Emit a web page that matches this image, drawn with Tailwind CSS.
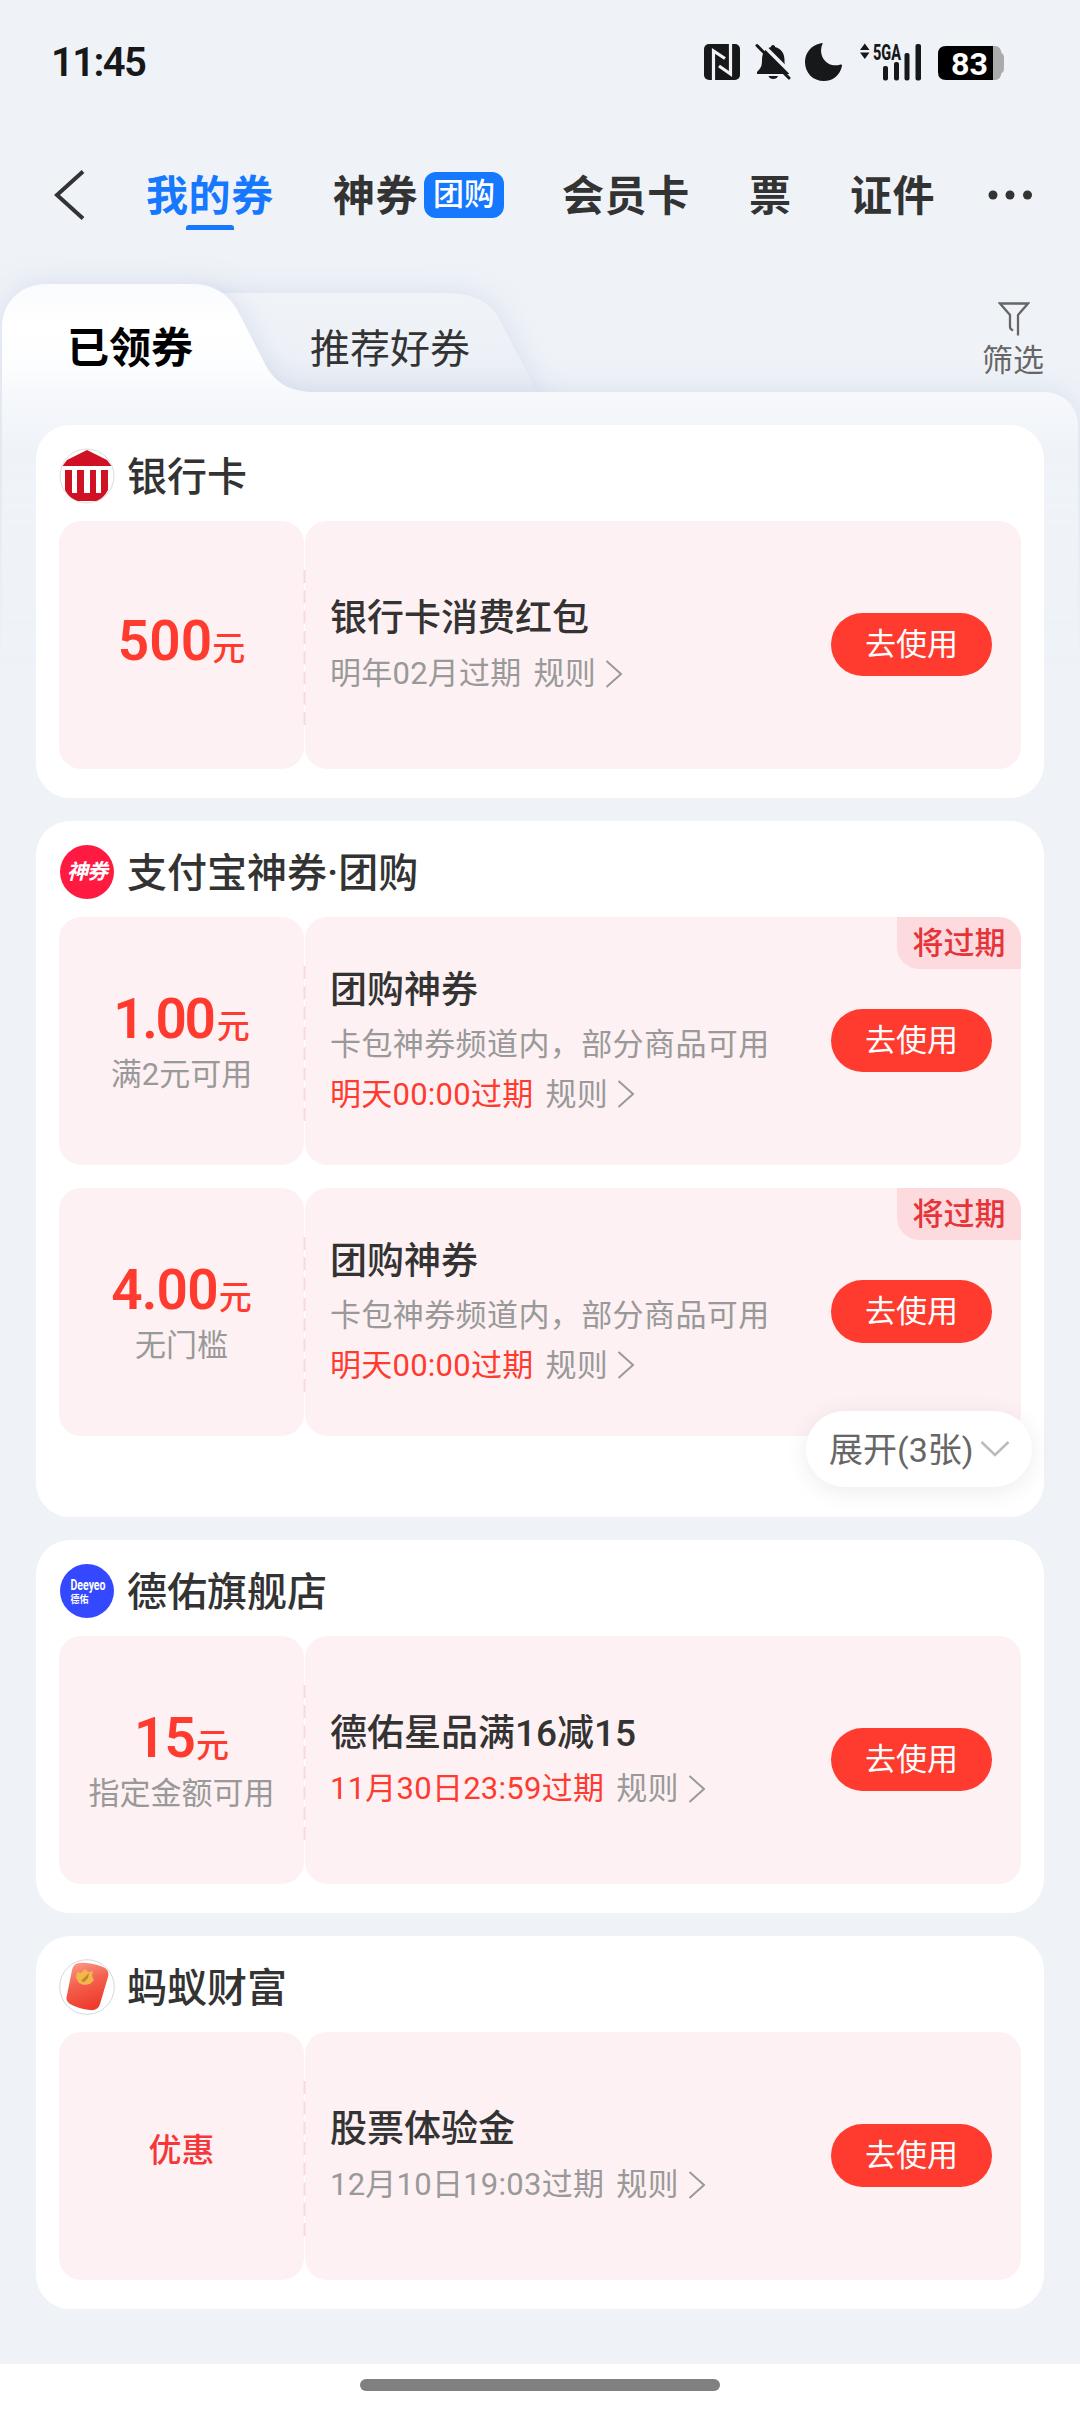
<!DOCTYPE html>
<html lang="zh-CN">
<head>
<meta charset="utf-8">
<title>我的券</title>
<script src="https://cdn.jsdelivr.net/npm/@tailwindcss/browser@4"></script>
</head>
<body class="w-[1080px] h-[2412px] overflow-hidden bg-[#eff3f8] font-['Roboto','Noto_Sans_CJK_SC',sans-serif] text-[#333]">
<div class="relative flex h-full flex-col">

  <!-- tab and sheet shapes behind the content -->
  <svg class="absolute left-0 top-[230px]" width="1080" height="520" viewBox="0 230 1080 520" fill="none">
    <defs>
      <linearGradient id="sheet" gradientUnits="userSpaceOnUse" x1="0" y1="284" x2="0" y2="455">
        <stop offset="0" stop-color="#fafbfe"/><stop offset=".25" stop-color="#fff"/><stop offset=".5" stop-color="#fcfdfe"/><stop offset=".65" stop-color="#f6f8fb"/><stop offset="1" stop-color="#eff3f8"/>
      </linearGradient>
      <linearGradient id="tab" gradientUnits="userSpaceOnUse" x1="0" y1="292" x2="0" y2="392">
        <stop offset="0" stop-color="#f0f4f8"/><stop offset=".6" stop-color="#edf1f7"/><stop offset="1" stop-color="#e7ebf3"/>
      </linearGradient>
      <filter id="soft" filterUnits="userSpaceOnUse" x="-60" y="200" width="1200" height="700"><feDropShadow dx="0" dy="0" stdDeviation="14" flood-color="#b4c0da" flood-opacity=".42"/></filter>
      <linearGradient id="fade" gradientUnits="userSpaceOnUse" x1="0" y1="460" x2="0" y2="670"><stop offset="0" stop-color="#fff"/><stop offset="1" stop-color="#000"/></linearGradient>
      <mask id="m" maskUnits="userSpaceOnUse" x="0" y="200" width="1080" height="560"><rect x="0" y="200" width="1080" height="560" fill="url(#fade)"/></mask>
    </defs>
    <g mask="url(#m)">
      <path filter="url(#soft)" fill="url(#tab)" d="M200 420V293H441C470 293 486 299 497 315L529 376Q533 387 540 392V420Z"/>
      <path filter="url(#soft)" fill="url(#sheet)" d="M2 900V329C2 300 22 284 47 284H192C216 284 231 296 241 317L266 366C277 385 292 392 315 392H1045C1063 392 1078 407 1078 425V900Z"/>
    </g>
  </svg>

  <!-- status bar -->
  <div class="relative flex h-[124px] items-center justify-between pl-[51px] pr-[76px]">
    <span class="pt-px text-[40px] font-semibold leading-none tracking-[-1.6px] text-[#17181a]">11:45</span>
    <svg width="300" height="60" viewBox="704 32 300 60" fill="#17181a">
      <rect x="704" y="44" width="36" height="36" rx="5"/>
      <g fill="none" stroke="#eff3f8" stroke-width="3.2"><path d="M713.500 80V51L725 58.500M730.500 44V74L719 66"/></g>
      <path d="M773 45c1.500 0 2 1 2 2 6 1.500 9.500 6 9.500 13 0 6 .5 8 4.500 12v2H757v-2c4-4 5-6 5-12 0-7 3-11.500 9-13 0-1 .5-2 2-2ZM768.500 76h9.500c-1 4-8.500 4-9.500 0Z"/>
      <path d="M760 42L794 76" stroke="#eff3f8" stroke-width="3.500"/>
      <path d="M757 45.500L789 78" stroke="#17181a" stroke-width="3" stroke-linecap="round"/>
      <path d="M822.500 44c-5 11 4 25 18 20.500q2-.5 1.500 1.500c-2 9-9 15-18 15-11 0-19-8-19-19 0-9 6-16.500 15-18.500q3.500-1 2.500.5Z"/>
      <path d="M860 50l4.800-6.500L869.500 50ZM860 52.500h9.500L864.800 59Z"/>
      <text x="873" y="59.500" font-family="Roboto" font-weight="800" font-size="22" textLength="28" lengthAdjust="spacingAndGlyphs">5GA</text>
      <rect x="883" y="66" width="5" height="14.500" rx="2"/><rect x="894" y="62" width="5" height="18.500" rx="2"/><rect x="904.500" y="53" width="5" height="27.500" rx="2"/><rect x="915.500" y="44" width="5.500" height="36.500" rx="2"/>
      <path fill="#a9abad" d="M990 46h5c4 0 6 3 6.500 7q2.500 1 2.500 4v12q0 3-2.500 4c-.5 4-2.500 7-6.500 7h-5Z"/>
      <path fill="#000" d="M946 46h47v34H946q-8 0-8-8V54q0-8 8-8Z"/>
      <text x="951" y="74.500" font-family="Roboto" font-weight="700" font-size="31" fill="#fff" textLength="37" lengthAdjust="spacingAndGlyphs">83</text>
    </svg>
  </div>

  <!-- category navigation -->
  <div class="relative flex h-[146px] items-center pl-[53px] text-[42px] font-bold leading-[60px] tracking-[0.6px]">
    <svg class="mb-[4px] shrink-0" width="32" height="50" viewBox="0 0 32 50" fill="none" stroke="#333" stroke-width="4"><path d="M30 1.500L4 25L30 48.500"/></svg>
    <div class="relative ml-[61px] w-[128px] text-[#1677ff]">我的券<span class="absolute -bottom-[3px] left-[40px] h-[5px] w-[48px] rounded-t-[3px] bg-[#1677ff]"></span></div>
    <div class="ml-[59px] w-[86px]">神券</div>
    <div class="mb-[4px] ml-[5px] flex h-[46px] w-[80px] items-center justify-center rounded-[12px] bg-[#1677ff] text-[31px] font-medium tracking-normal text-white">团购</div>
    <div class="ml-[58px] w-[128px]">会员卡</div>
    <div class="ml-[59px] w-[43px]">票</div>
    <div class="ml-[58px] w-[86px]">证件</div>
    <svg class="mb-[4px] ml-[51px]" width="46" height="12" viewBox="0 0 46 12" fill="#333"><circle cx="6" cy="6" r="4.500"/><circle cx="23" cy="6" r="4.500"/><circle cx="40.500" cy="6" r="4.500"/></svg>
  </div>

  <!-- sub tabs -->
  <div class="relative flex h-[122px] pl-[67px] pr-[36px]">
    <div class="mt-[49px] w-[240px] text-[42px] font-bold leading-[60px] text-black">已领券</div>
    <div class="mt-[50px] ml-[3px] text-[40px] leading-[60px]">推荐好券</div>
    <div class="ml-auto mt-[31px] flex w-[62px] flex-col items-center text-[31px] leading-[36px] text-[#666]">
      <svg class="ml-[2px]" width="32" height="36" viewBox="0 0 32 36" fill="none" stroke="#666" stroke-width="2.300"><path d="M20 34.500V14L30 2.500H2L12 14V26Q12 28 15 29.500"/></svg>
      <span class="mt-[6px]">筛选</span>
    </div>
  </div>

  <main class="relative flex flex-col gap-[23px] px-[36px] pt-[33px]">

    <section class="h-[373px] w-[1008px] rounded-[34px] bg-white px-[23px] pt-[24px]">
      <header class="flex h-[54px] items-center gap-[12px] text-[40px] font-medium leading-[54px]">
        <svg width="56" height="56" viewBox="0 0 56 56"><circle cx="28" cy="28" r="27" fill="#fff" stroke="#ddd"/><path fill="#d01124" d="M28 2L48 12L52.500 18H3.500L8 12ZM6 22H13V45H18V22H25V45H31V22H37V45H42V22H49V42Q45 50 37.500 53H18.500Q10 50 6 42Z"/></svg>
        <h2 class="pt-[3px]">银行卡</h2>
      </header>
      <article class="mt-[18px] flex h-[248px] items-center rounded-[22px]">
        <div class="flex h-full w-[245px] items-center justify-center rounded-[22px] bg-[#fef1f3]">
          <p class="flex items-baseline leading-[60px] text-[#ff3b30]"><b class="text-[55px] font-semibold">500</b><span class="text-[33px] font-medium">元</span></p>
        </div>
        <svg class="z-10 -mx-px mt-[5px] shrink-0" width="3" height="155" viewBox="0 0 3 155"><path d="M1.500 0V155" stroke="#f9d9de" stroke-width="2" stroke-dasharray="13 7.300"/></svg>
        <div class="flex h-full flex-1 items-center justify-between rounded-[22px] bg-[#fef1f3] pl-[25px] pr-[29px]">
          <div class="pt-[2px]">
            <h3 class="text-[37px] font-medium leading-[55px]">银行卡消费红包</h3>
            <p class="flex items-center gap-[12px] text-[31px] leading-[56px] tracking-[0.25px] text-[#999]"><span>明年02月过期</span><span class="flex items-center gap-[9px]">规则<svg width="18" height="28" viewBox="0 0 18 28" fill="none" stroke="#999" stroke-width="2"><path d="M1.500 1L16 14L1.500 27"/></svg></span></p>
          </div>
          <button class="mb-[2px] h-[63px] w-[161px] rounded-full bg-[#ff3b30] text-[31px] leading-[64px] text-white">去使用</button>
        </div>
      </article>
    </section>

    <section class="relative h-[696px] w-[1008px] rounded-[34px] bg-white px-[23px] pt-[24px]">
      <header class="flex h-[54px] items-center gap-[13px] text-[40px] font-medium leading-[54px]">
        <div class="ml-px flex h-[54px] w-[54px] items-center justify-center rounded-full bg-[#ff1a42] text-[21px] font-bold italic tracking-[-1px] text-white">神券</div>
        <h2 class="pt-[3px]">支付宝神券·团购</h2>
      </header>
      <article class="relative mt-[18px] flex h-[248px] items-center rounded-[22px]">
        <div class="flex h-full w-[245px] flex-col items-center justify-center rounded-[22px] bg-[#fef1f3]">
          <p class="mt-[5px] flex items-baseline leading-[60px] text-[#ff3b30]"><b class="text-[55px] font-semibold tracking-[-2.4px]">1.00</b><span class="ml-[3px] text-[33px] font-medium">元</span></p>
          <p class="-mt-[5px] text-[31px] leading-[46px] text-[#999]">满2元可用</p>
        </div>
        <svg class="z-10 -mx-px mt-[5px] shrink-0" width="3" height="155" viewBox="0 0 3 155"><path d="M1.500 0V155" stroke="#f9d9de" stroke-width="2" stroke-dasharray="13 7.300"/></svg>
        <div class="flex h-full flex-1 items-center justify-between rounded-[22px] bg-[#fef1f3] pl-[25px] pr-[29px]">
          <div class="pb-[3px]">
            <h3 class="text-[37px] font-medium leading-[59px]">团购神券</h3>
            <p class="text-[31px] leading-[50px] tracking-[0.4px] text-[#999]">卡包神券频道内，部分商品可用</p>
            <p class="flex items-center gap-[12px] text-[31px] leading-[49px] tracking-[0.25px] text-[#999]"><span class="text-[#ff3b30]">明天00:00过期</span><span class="flex items-center gap-[9px]">规则<svg width="18" height="28" viewBox="0 0 18 28" fill="none" stroke="#999" stroke-width="2"><path d="M1.500 1L16 14L1.500 27"/></svg></span></p>
          </div>
          <button class="mb-[2px] h-[63px] w-[161px] rounded-full bg-[#ff3b30] text-[31px] leading-[64px] text-white">去使用</button>
        </div>
        <span class="absolute right-0 top-0 h-[52px] w-[124px] rounded-tr-[22px] rounded-bl-[22px] bg-[#fcdadd] text-center text-[31px] font-medium leading-[53px] text-[#e5353a]">将过期</span>
      </article>
      <article class="relative mt-[23px] flex h-[248px] items-center rounded-[22px]">
        <div class="flex h-full w-[245px] flex-col items-center justify-center rounded-[22px] bg-[#fef1f3]">
          <p class="mt-[5px] flex items-baseline leading-[60px] text-[#ff3b30]"><b class="text-[55px] font-semibold tracking-[-0.8px]">4.00</b><span class="ml-px text-[33px] font-medium">元</span></p>
          <p class="-mt-[5px] text-[31px] leading-[46px] text-[#999]">无门槛</p>
        </div>
        <svg class="z-10 -mx-px mt-[5px] shrink-0" width="3" height="155" viewBox="0 0 3 155"><path d="M1.500 0V155" stroke="#f9d9de" stroke-width="2" stroke-dasharray="13 7.300"/></svg>
        <div class="flex h-full flex-1 items-center justify-between rounded-[22px] bg-[#fef1f3] pl-[25px] pr-[29px]">
          <div class="pb-[3px]">
            <h3 class="text-[37px] font-medium leading-[59px]">团购神券</h3>
            <p class="text-[31px] leading-[50px] tracking-[0.4px] text-[#999]">卡包神券频道内，部分商品可用</p>
            <p class="flex items-center gap-[12px] text-[31px] leading-[49px] tracking-[0.25px] text-[#999]"><span class="text-[#ff3b30]">明天00:00过期</span><span class="flex items-center gap-[9px]">规则<svg width="18" height="28" viewBox="0 0 18 28" fill="none" stroke="#999" stroke-width="2"><path d="M1.500 1L16 14L1.500 27"/></svg></span></p>
          </div>
          <button class="mb-[2px] h-[63px] w-[161px] rounded-full bg-[#ff3b30] text-[31px] leading-[64px] text-white">去使用</button>
        </div>
        <span class="absolute right-0 top-0 h-[52px] w-[124px] rounded-tr-[22px] rounded-bl-[22px] bg-[#fcdadd] text-center text-[31px] font-medium leading-[53px] text-[#e5353a]">将过期</span>
      </article>
      <button class="absolute bottom-[30px] right-[12px] flex h-[76px] w-[226px] items-center gap-[6px] rounded-full bg-white pl-[23px] text-[34px] text-[#666] shadow-[0_4px_24px_rgba(0,0,0,0.08)]"><span class="pt-[2px]">展开(3张)</span><svg width="30" height="18" viewBox="0 0 30 18" fill="none" stroke="#bbb" stroke-width="2.500"><path d="M1.500 2L15 15L28.500 2"/></svg></button>
    </section>

    <section class="h-[373px] w-[1008px] rounded-[34px] bg-white px-[23px] pt-[24px]">
      <header class="flex h-[54px] items-center gap-[13px] text-[40px] font-medium leading-[54px]">
        <svg class="ml-px" width="54" height="54" viewBox="60 1564 54 54" fill="#fff" font-family="Roboto, 'Noto Sans CJK SC', sans-serif" font-weight="700"><circle cx="87" cy="1591" r="27" fill="#3348ff"/><text x="70.500" y="1590" font-size="14" textLength="35" lengthAdjust="spacingAndGlyphs">Deeyeo</text><text x="70.500" y="1602.500" font-size="10" textLength="18" lengthAdjust="spacingAndGlyphs">德佑</text></svg>
        <h2 class="pt-[3px]">德佑旗舰店</h2>
      </header>
      <article class="mt-[18px] flex h-[248px] items-center rounded-[22px]">
        <div class="flex h-full w-[245px] flex-col items-center justify-center rounded-[22px] bg-[#fef1f3]">
          <p class="mt-[5px] flex items-baseline leading-[60px] text-[#ff3b30]"><b class="text-[55px] font-semibold tracking-[-1px]">15</b><span class="ml-px text-[33px] font-medium">元</span></p>
          <p class="-mt-[5px] text-[31px] leading-[46px] text-[#999]">指定金额可用</p>
        </div>
        <svg class="z-10 -mx-px mt-[5px] shrink-0" width="3" height="155" viewBox="0 0 3 155"><path d="M1.500 0V155" stroke="#f9d9de" stroke-width="2" stroke-dasharray="13 7.300"/></svg>
        <div class="flex h-full flex-1 items-center justify-between rounded-[22px] bg-[#fef1f3] pl-[25px] pr-[29px]">
          <div class="pt-[2px]">
            <h3 class="text-[37px] font-medium leading-[55px]">德佑星品满16减15</h3>
            <p class="flex items-center gap-[12px] text-[31px] leading-[56px] tracking-[0.25px] text-[#999]"><span class="text-[#ff3b30]">11月30日23:59过期</span><span class="flex items-center gap-[9px]">规则<svg width="18" height="28" viewBox="0 0 18 28" fill="none" stroke="#999" stroke-width="2"><path d="M1.500 1L16 14L1.500 27"/></svg></span></p>
          </div>
          <button class="mb-[2px] h-[63px] w-[161px] rounded-full bg-[#ff3b30] text-[31px] leading-[64px] text-white">去使用</button>
        </div>
      </article>
    </section>

    <section class="h-[373px] w-[1008px] rounded-[34px] bg-white px-[23px] pt-[24px]">
      <header class="flex h-[54px] items-center gap-[12px] text-[40px] font-medium leading-[54px]">
        <svg width="56" height="56" viewBox="0 0 56 56"><defs><linearGradient id="env" x1="0" y1="0" x2=".3" y2="1"><stop offset="0" stop-color="#fba08c"/><stop offset=".5" stop-color="#f4604f"/><stop offset="1" stop-color="#ee3d2e"/></linearGradient></defs><circle cx="28" cy="28" r="27.300" fill="#fff" stroke="#cfd9e2"/><path fill="url(#env)" d="M20 4Q30 3 44 8Q51 11 49 18L41 45Q39 52 31 51Q20 50 11 45Q6 42 8 36L13 11Q14 5 20 4Z"/><path fill="#f3b64a" d="M18 13l4 1 4-4 3 3 5-1-1 5 2 4-4 4-6 1-5-2-3-5Z"/><path d="M22 22l8-8-1 5-4 4Z" fill="#c5832a"/></svg>
        <h2 class="pt-[3px]">蚂蚁财富</h2>
      </header>
      <article class="mt-[18px] flex h-[248px] items-center rounded-[22px]">
        <div class="flex h-full w-[245px] items-center justify-center rounded-[22px] bg-[#fef1f3]">
          <p class="mb-[10px] text-[33px] font-medium leading-[50px] text-[#f5373a]">优惠</p>
        </div>
        <svg class="z-10 -mx-px mt-[5px] shrink-0" width="3" height="155" viewBox="0 0 3 155"><path d="M1.500 0V155" stroke="#f9d9de" stroke-width="2" stroke-dasharray="13 7.300"/></svg>
        <div class="flex h-full flex-1 items-center justify-between rounded-[22px] bg-[#fef1f3] pl-[25px] pr-[29px]">
          <div class="pt-[2px]">
            <h3 class="text-[37px] font-medium leading-[55px]">股票体验金</h3>
            <p class="flex items-center gap-[12px] text-[31px] leading-[56px] tracking-[0.25px] text-[#999]"><span>12月10日19:03过期</span><span class="flex items-center gap-[9px]">规则<svg width="18" height="28" viewBox="0 0 18 28" fill="none" stroke="#999" stroke-width="2"><path d="M1.500 1L16 14L1.500 27"/></svg></span></p>
          </div>
          <button class="mb-[2px] h-[63px] w-[161px] rounded-full bg-[#ff3b30] text-[31px] leading-[64px] text-white">去使用</button>
        </div>
      </article>
    </section>
  </main>

  <!-- gesture bar -->
  <footer class="relative mt-auto flex h-[48px] justify-center bg-white pt-[15px]"><div class="h-[12px] w-[360px] rounded-full bg-[#808080]"></div></footer>
</div>
</body>
</html>
